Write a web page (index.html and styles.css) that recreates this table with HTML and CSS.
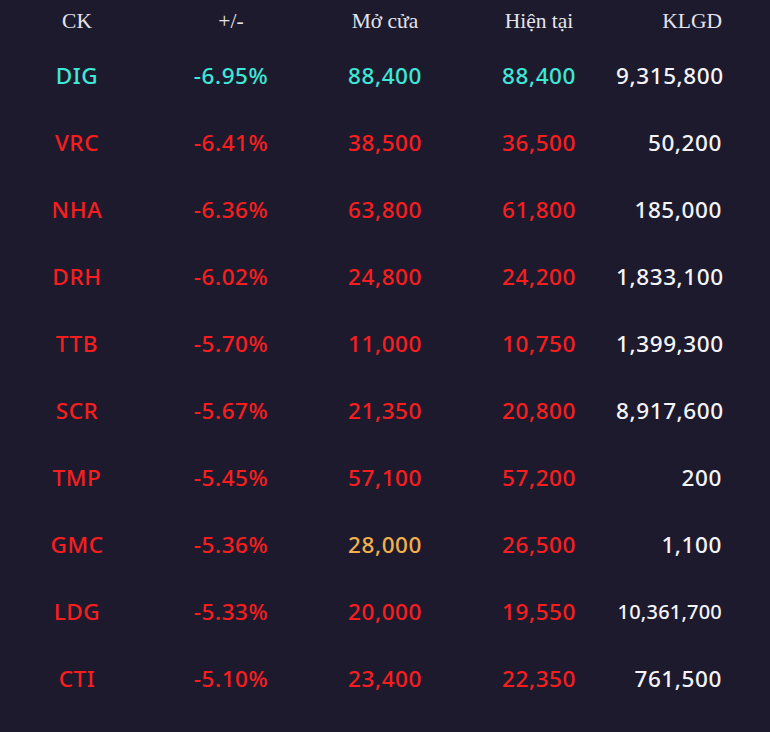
FILE: index.html
```html
<!DOCTYPE html>
<html lang="vi">
<head>
<meta charset="utf-8">
<title>Bảng giá</title>
<link rel="stylesheet" href="styles.css">
</head>
<body>
<div class="board">
  <div class="row head">
    <div class="c">CK</div>
    <div class="c">+/-</div>
    <div class="c">Mở cửa</div>
    <div class="c">Hiện tại</div>
    <div class="r">KLGD</div>
  </div>
  <div class="row data">
    <div class="c cyan">DIG</div>
    <div class="c cyan">-6.95%</div>
    <div class="c cyan">88,400</div>
    <div class="c cyan">88,400</div>
    <div class="r white">9,315,800</div>
  </div>
  <div class="row data">
    <div class="c red">VRC</div>
    <div class="c red">-6.41%</div>
    <div class="c red">38,500</div>
    <div class="c red">36,500</div>
    <div class="r white">50,200</div>
  </div>
  <div class="row data">
    <div class="c red">NHA</div>
    <div class="c red">-6.36%</div>
    <div class="c red">63,800</div>
    <div class="c red">61,800</div>
    <div class="r white">185,000</div>
  </div>
  <div class="row data">
    <div class="c red">DRH</div>
    <div class="c red">-6.02%</div>
    <div class="c red">24,800</div>
    <div class="c red">24,200</div>
    <div class="r white">1,833,100</div>
  </div>
  <div class="row data">
    <div class="c red">TTB</div>
    <div class="c red">-5.70%</div>
    <div class="c red">11,000</div>
    <div class="c red">10,750</div>
    <div class="r white">1,399,300</div>
  </div>
  <div class="row data">
    <div class="c red">SCR</div>
    <div class="c red">-5.67%</div>
    <div class="c red">21,350</div>
    <div class="c red">20,800</div>
    <div class="r white">8,917,600</div>
  </div>
  <div class="row data">
    <div class="c red">TMP</div>
    <div class="c red">-5.45%</div>
    <div class="c red">57,100</div>
    <div class="c red">57,200</div>
    <div class="r white">200</div>
  </div>
  <div class="row data">
    <div class="c red">GMC</div>
    <div class="c red">-5.36%</div>
    <div class="c orange">28,000</div>
    <div class="c red">26,500</div>
    <div class="r white">1,100</div>
  </div>
  <div class="row data">
    <div class="c red">LDG</div>
    <div class="c red">-5.33%</div>
    <div class="c red">20,000</div>
    <div class="c red">19,550</div>
    <div class="r white small">10,361,700</div>
  </div>
  <div class="row data">
    <div class="c red">CTI</div>
    <div class="c red">-5.10%</div>
    <div class="c red">23,400</div>
    <div class="c red">22,350</div>
    <div class="r white">761,500</div>
  </div>
  <div class="note">Nguồn: Tổng hợp thị trường. Cổ phiếu giảm sâu nhất</div>
</div>
</body>
</html>
```

FILE: styles.css
```css
html, body {
  margin: 0;
  padding: 0;
  background: #1d1a2e;
  height: 732px;
  overflow: hidden;
}

.board {
  width: 770px;
}

.row {
  display: grid;
  grid-template-columns: 154px 154px 154px 154px 154px;
  align-items: center;
}

.row .c {
  text-align: center;
}

.row .r {
  text-align: right;
  padding-right: 48px;
}

.head {
  height: 42px;
  font-family: "Liberation Serif", "DejaVu Serif", serif;
  font-size: 21.5px;
  color: #e4e4ea;
}

.data {
  height: 67px;
  font-family: "Noto Sans", "Open Sans", sans-serif;
  font-size: 22.5px;
  font-weight: 500;
  letter-spacing: 0.6px;
}

.cyan { color: #3de8d6; }
.red { color: #f81e1e; }
.orange { color: #f2b04c; }
.white { color: #f4f4f6; }
.small { font-size: 20px; letter-spacing: 0.2px; }

.note {
  padding: 15px 0 0 52px;
  font-family: "Noto Sans", sans-serif;
  font-size: 22px;
  font-weight: 500;
  color: #f81e1e;
}
```
